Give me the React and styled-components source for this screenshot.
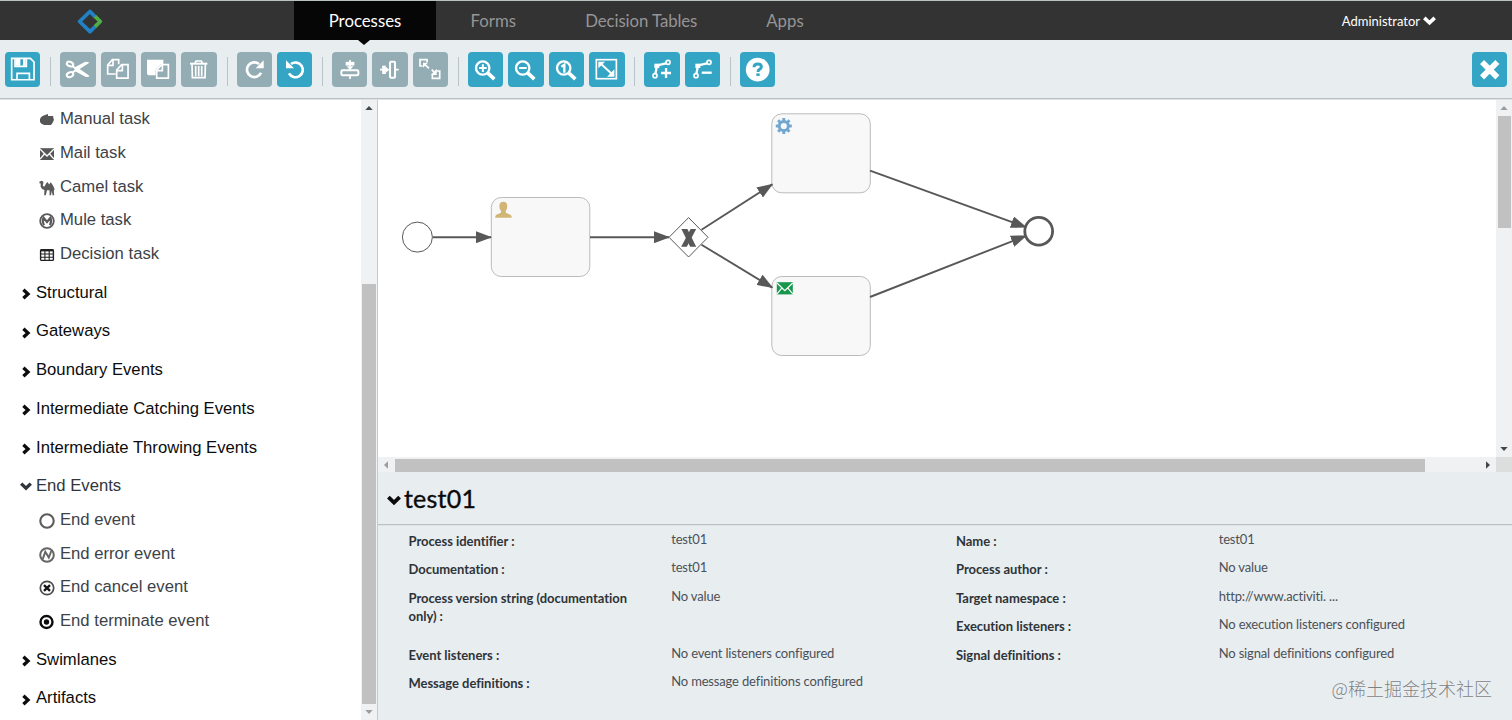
import React from 'react';
import styled, { createGlobalStyle } from 'styled-components';

const GlobalStyle = createGlobalStyle`
  *, *::before, *::after {
    box-sizing: border-box;
  }
  body {
    margin: 0;
    overflow: hidden;
    background: #fff;
    font-family: Lato, 'Noto Sans', sans-serif;
  }
`;

const Page = styled.div`
  display: flex;
  flex-direction: column;
  width: 1512px;
  height: 720px;
  overflow: hidden;
`;

/* top navigation */

const Navbar = styled.nav`
  display: flex;
  flex: none;
  height: 40px;
  border-top: 1px solid #bac2c0;
  background: #333;
`;

const Brand = styled.a`
  display: flex;
  width: 294px;
  padding: 7px 0 0 76px;
`;

const Tab = styled.a`
  position: relative;
  display: flex;
  align-items: center;
  justify-content: center;
  width: ${({ $width }) => $width}px;
  font-size: 16.8px;
  letter-spacing: ${({ $spacing = 0 }) => $spacing}px;
  white-space: nowrap;
  color: ${({ $active }) => ($active ? '#fff' : '#959595')};
  background: ${({ $active }) => ($active ? '#060606' : 'transparent')};

  &::after {
    content: '';
    display: ${({ $active }) => ($active ? 'block' : 'none')};
    position: absolute;
    top: 100%;
    left: 50%;
    margin-left: -7px;
    border: 6px solid transparent;
    border-top: 5px solid #060606;
    border-bottom: 0;
  }
`;

const Account = styled.div`
  display: flex;
  align-items: center;
  gap: 3px;
  margin-left: auto;
  padding-right: 76px;
  font-size: 13px;
  color: #fff;

  svg {
    margin-bottom: 1px;
  }
`;

/* editor toolbar */

const Toolbar = styled.div`
  display: flex;
  flex: none;
  align-items: flex-start;
  height: 60px;
  padding: 12px 4.7px 0 5px;
  border-bottom: 1px solid #dfe2e5;
  box-shadow: inset 0 -1px #bcc1c7;
  background: #e8edf0;
`;

const ButtonGroup = styled.div`
  display: flex;
  gap: 5px;

  & + & {
    margin-left: 9.9px;
    padding-left: 9.9px;
    background: linear-gradient(#b9c4ca, #b9c4ca) no-repeat 0 5px / 1px 29px;
  }
`;

const ToolButton = styled.button`
  width: 35.4px;
  height: 35.4px;
  padding: 0;
  border: 0;
  border-radius: 4px;
  color: #fff;
  background: ${({ $disabled }) => ($disabled ? '#94adb4' : '#34a5c4')};

  svg {
    display: block;
    width: 100%;
    height: 100%;
  }
`;

const CloseButton = styled(ToolButton)`
  margin-left: auto;
`;

/* stencil palette */

const Workspace = styled.main`
  display: flex;
  flex: 1;
  min-height: 0;
`;

const Palette = styled.aside`
  display: flex;
  flex: none;
  width: 378px;
  border-right: 1px solid #c6cace;
`;

const StencilList = styled.div`
  flex: 1;
  padding-top: 2.5px;
  font-family: 'Liberation Sans', Arial, sans-serif;
  font-size: 16.66px;
`;

const Group = styled.div`
  display: flex;
  align-items: center;
  gap: 4px;
  height: 33.7px;
  margin-top: 5px;
  padding-left: 20px;
  color: ${({ $open }) => ($open ? '#30363c' : '#0c0c0c')};

  svg {
    margin-top: ${({ $open }) => ($open ? 0 : 3)}px;
  }
`;

const Stencil = styled.div`
  display: flex;
  align-items: center;
  gap: 5px;
  height: 33.7px;
  padding-left: 39px;
  color: #3c4248;

  svg {
    margin-top: 2px;
  }
`;

/* scrollbars */

const Scrollbar = styled.div`
  display: flex;
  flex: none;
  align-items: center;
  justify-content: space-between;
  flex-direction: ${({ $horizontal }) => ($horizontal ? 'row' : 'column')};
  ${({ $horizontal }) =>
    $horizontal ? 'height: 15px; flex: 1;' : 'width: 16px;'}
  background: #f0f1f2;
`;

const Thumb = styled.div`
  flex: none;
  width: ${({ $width }) => $width}px;
  height: ${({ $height }) => $height}px;
  margin-top: ${({ $top = 0 }) => $top}px;
  margin-right: ${({ $right = 0 }) => $right}px;
  margin-bottom: ${({ $bottom = 0 }) => $bottom}px;
  background: #c1c1c1;
`;

const ScrollArrow = styled.svg`
  flex: none;
  width: 16px;
  height: 16px;
  fill: ${({ $muted }) => ($muted ? '#9b9d9f' : '#454749')};
  transform: rotate(${({ $turn = 0 }) => $turn}deg);
`;

const Editor = styled.section`
  display: flex;
  flex: 1;
  flex-direction: column;
  min-width: 0;
`;

const CanvasRow = styled.div`
  display: flex;
  flex: none;
  height: 357px;
`;

const Diagram = styled.svg`
  display: block;
  flex: none;
  background: #fff;
`;

const ScrollRow = styled.div`
  display: flex;
  flex: none;
  height: 15px;
`;

const Corner = styled.div`
  width: 16px;
  background: #dcdddd;
`;

/* properties */

const Properties = styled.section`
  position: relative;
  flex: 1;
  background: #e8edf0;
`;

const PropertiesTitle = styled.h2`
  display: flex;
  align-items: center;
  gap: 3.5px;
  height: 54px;
  margin: 0;
  padding: 0 0 1px 8.5px;
  border-bottom: 1px solid #dfe2e5;
  box-shadow: inset 0 -1px #bcc1c7;
  font-size: 25px;
  font-weight: 400;
  letter-spacing: 0.2px;
  color: #0a0a0a;
  -webkit-text-stroke: 0.35px #0a0a0a;

  svg {
    margin-top: 4px;
  }
`;

const Columns = styled.div`
  display: grid;
  grid-template-columns: 547.5px 1fr;
  padding: 0 0 0 30.5px;
`;

const Property = styled.dl`
  display: grid;
  grid-template-columns: 230px 1fr;
  column-gap: 32.7px;
  height: ${({ $tall }) => ($tall ? 57 : 28.5)}px;
  margin: 0;
  font-size: 13px;
  line-height: 18.4px;

  dt {
    padding-top: 5.5px;
    font-weight: 700;
    letter-spacing: -0.04px;
    color: #2f3439;
  }
  dd {
    margin: 0;
    padding-top: 3.7px;
    letter-spacing: -0.16px;
    color: #4c5157;
  }
`;

const Watermark = styled.span`
  position: absolute;
  right: 20px;
  bottom: 19px;
  font-family: 'Noto Sans CJK SC', sans-serif;
  font-size: 18px;
  font-weight: 300;
  line-height: 26px;
  color: #7d8185;
  text-shadow: 0 0 1px #fff;
`;

const Magnifier = ({ children }) => (
  <>
    <circle cx="44" cy="48" r="20" fill="none" stroke="currentColor" strokeWidth="7" />
    <path d="M58 62 L79 81" stroke="currentColor" strokeWidth="11" />
    {children}
  </>
);

const Flow = () => (
  <g fill="none" stroke="currentColor">
    <path d="M34 66 L39 40 L66 34" strokeWidth="7" />
    <circle cx="33" cy="71" r="6" strokeWidth="5" />
    <circle cx="72" cy="31" r="6" strokeWidth="5" />
    <path d="M31 35h15v13H31z" fill="currentColor" stroke="none" />
  </g>
);

const toolIcons = {
  save: (
    <g fill="none" stroke="currentColor" strokeWidth="5">
      <path d="M20 19H76L87 30V83H20Z" />
      <path d="M36 83V64H73V83" />
      <path d="M30 20V43H64V20" />
      <path d="M32 21H46V41H32ZM54 21H62V41H54Z" fill="currentColor" stroke="none" />
    </g>
  ),
  cut: (
    <g fill="none" stroke="currentColor" strokeWidth="6">
      <ellipse cx="30" cy="36" rx="10" ry="6.5" transform="rotate(22 30 36)" />
      <ellipse cx="30" cy="68" rx="10" ry="7" transform="rotate(-22 30 68)" />
      <path d="M36 41 L48 50 M36 63 L48 54" />
      <path
        d="M44 46 L76 29 Q84 29 88 32 L59 51 L89 72 Q83 77 76 74 L44 57Z"
        fill="currentColor"
        stroke="none"
      />
    </g>
  ),
  copy: (
    <g fill="none" stroke="currentColor" strokeWidth="5">
      <path d="M44 66H20V39L34 23H53V37" />
      <path d="M20 40H36V24" />
      <path d="M47 78V54L62 38H81V78Z" />
      <path d="M48 56H64V39" />
    </g>
  ),
  paste: (
    <>
      <path d="M18 23H67V36H60L44 53V70H22L18 66Z" fill="currentColor" />
      <g fill="none" stroke="currentColor" strokeWidth="5">
        <path d="M47 78V54L62 38H82V78Z" />
        <path d="M48 56H64V39" />
      </g>
    </>
  ),
  trash: (
    <g fill="none" stroke="currentColor" strokeWidth="5">
      <path d="M27 35H79" strokeWidth="6" />
      <path d="M42 34L45 27H61L64 34" />
      <path d="M33 37L34 77H72L73 37" />
      <path d="M44 42V73M53 42V73M62 42V73" />
    </g>
  ),
  redo: (
    <>
      <path
        d="M72 62 A22 22 0 1 1 66 36"
        fill="none"
        stroke="currentColor"
        strokeWidth="8"
      />
      <path d="M80 25V49H56Z" fill="currentColor" />
    </>
  ),
  undo: (
    <>
      <path
        d="M42 36 A22 22 0 1 1 36 64"
        fill="none"
        stroke="currentColor"
        strokeWidth="8"
      />
      <path d="M27 25V49H51Z" fill="currentColor" />
    </>
  ),
  alignVertical: (
    <g fill="none" stroke="currentColor">
      <rect x="28" y="55" width="51" height="15" rx="4" strokeWidth="6" />
      <path d="M54 24V43M54 70V81" strokeWidth="5" />
      <path d="M41 35H67" strokeWidth="11" />
      <path d="M44 43H64L54 54Z" fill="currentColor" stroke="none" />
    </g>
  ),
  alignHorizontal: (
    <g fill="none" stroke="currentColor">
      <rect x="54" y="29" width="15" height="48" rx="3" strokeWidth="6" />
      <path d="M24 53H43M70 53H80" strokeWidth="5" />
      <path d="M36 41V66" strokeWidth="11" />
      <path d="M41 44V62L52 53Z" fill="currentColor" stroke="none" />
    </g>
  ),
  sameSize: (
    <g fill="none" stroke="currentColor" strokeWidth="5">
      <path d="M29 42H21V23H42V31" />
      <path d="M67 57H80V79H58V69" />
      <path d="M36 38L48 49M56 53L65 62" />
      <path d="M30 32H45L30 47ZM71 50V69H53Z" fill="currentColor" stroke="none" />
    </g>
  ),
  zoomIn: (
    <Magnifier>
      <path d="M33 48H56M44.5 37V60" stroke="currentColor" strokeWidth="6" />
    </Magnifier>
  ),
  zoomOut: (
    <Magnifier>
      <path d="M33 48H56" stroke="currentColor" strokeWidth="6" />
    </Magnifier>
  ),
  zoomActual: (
    <Magnifier>
      <path d="M37 44L46 38V62" fill="none" stroke="currentColor" strokeWidth="7" />
    </Magnifier>
  ),
  zoomFit: (
    <>
      <rect x="22" y="23" width="60" height="57" fill="none" stroke="currentColor" strokeWidth="5" />
      <path d="M37 37L68 65" stroke="currentColor" strokeWidth="6" />
      <path d="M28 29H48L28 49ZM76 52V74H54Z" fill="currentColor" />
    </>
  ),
  bendAdd: (
    <>
      <Flow />
      <path d="M51 63H81M66 48V78" stroke="currentColor" strokeWidth="7" />
    </>
  ),
  bendRemove: (
    <>
      <Flow />
      <path d="M50 62H80" stroke="currentColor" strokeWidth="7" />
    </>
  ),
  help: (
    <>
      <circle cx="53" cy="53" r="35.5" fill="currentColor" />
      <path
        d="M42 46Q42 36 53 36Q64 36 64 44.5Q64 50 58 52.5Q54 54 54 60"
        fill="none"
        stroke="#34a5c4"
        strokeWidth="9"
      />
      <path d="M49 64H59V72H49Z" fill="#34a5c4" />
    </>
  ),
  close: <path d="M30 30L76 76M76 30L30 76" stroke="currentColor" strokeWidth="17" />,
};

const ToolIcon = ({ name }) => <svg viewBox="0 0 106 106">{toolIcons[name]}</svg>;

const Chevron = ({ down, size = 12 }) => (
  <svg width={size} height={size} viewBox="0 0 12 12">
    <path
      d={down ? 'M1.2 3.6L6 8.2L10.8 3.6' : 'M3.4 1.8L8 6L3.4 10.2'}
      fill="none"
      stroke="currentColor"
      strokeWidth="3.3"
    />
  </svg>
);

const stencilIcons = {
  manual: (
    <path
      d="M1 7Q2 4 6 3L9 2V4H14Q15 5 14 6L15 7L14.5 9L13.5 11L12 13H5Q2 12 1 10Z"
      fill="#565656"
    />
  ),
  mail: (
    <>
      <path d="M1 2.2H15V14H1Z" fill="#565656" />
      <path
        d="M1 3L8 10L15 3M1 13.2L5.4 8M15 13.2L10.6 8"
        fill="none"
        stroke="#fff"
        strokeWidth="1.3"
      />
    </>
  ),
  camel: (
    <path
      d="M0.5 1.5L3 0.8L4.5 2L3.8 6L5.5 6.5L7 3.4L8.7 2L10 4.4L11.8 2.2L14 5.5L15.6 9L14.8 11L15.2 15.2H13.6L12.8 11L12 15.2H10.6L10.5 10.3L8 10.2L6.8 15.2H5.2L5.4 10L3 9L1.6 6.5L1.7 3.6L0.4 3.3Z"
      fill="#5a5a5a"
    />
  ),
  mule: (
    <>
      <circle cx="8" cy="8" r="6.8" fill="none" stroke="#5a5a5a" strokeWidth="1.8" />
      <path
        d="M5 12.3Q2.9 8 4.6 4.8L8 9L11.4 4.8Q13 8 11 12.3"
        fill="none"
        stroke="#5a5a5a"
        strokeWidth="2.2"
      />
    </>
  ),
  decision: (
    <g fill="none" stroke="#222">
      <rect x="1.6" y="2.6" width="12.8" height="10.8" rx="1" strokeWidth="1.4" />
      <path d="M1.5 3.4H14.5" strokeWidth="2" />
      <path d="M1.5 7H14.5M1.5 10.2H14.5M5.9 3V13M10.2 3V13" strokeWidth="1.1" />
    </g>
  ),
  end: <circle cx="8" cy="8" r="6.7" fill="none" stroke="#5c5c5c" strokeWidth="2.1" />,
  error: (
    <g fill="none" stroke="#666">
      <circle cx="8" cy="8" r="6.8" strokeWidth="2" />
      <path d="M3.8 11.8L6.3 4.8L9.8 10.5L12.3 4" strokeWidth="2" />
    </g>
  ),
  cancel: (
    <g fill="none">
      <circle cx="8" cy="8" r="6.7" stroke="#4a4a4a" strokeWidth="1.7" />
      <path d="M5 5.2L11 10.8M11 5.2L5 10.8" stroke="#151515" strokeWidth="2.4" />
    </g>
  ),
  terminate: (
    <>
      <circle cx="7.5" cy="8" r="6" fill="none" stroke="#0d0d0d" strokeWidth="2.4" />
      <circle cx="7.5" cy="8" r="2.7" fill="#0d0d0d" />
    </>
  ),
};

const toolGroups = [
  [{ icon: 'save' }],
  [
    { icon: 'cut', disabled: true },
    { icon: 'copy', disabled: true },
    { icon: 'paste', disabled: true },
    { icon: 'trash', disabled: true },
  ],
  [{ icon: 'redo', disabled: true }, { icon: 'undo' }],
  [
    { icon: 'alignVertical', disabled: true },
    { icon: 'alignHorizontal', disabled: true },
    { icon: 'sameSize', disabled: true },
  ],
  [{ icon: 'zoomIn' }, { icon: 'zoomOut' }, { icon: 'zoomActual' }, { icon: 'zoomFit' }],
  [{ icon: 'bendAdd' }, { icon: 'bendRemove' }],
  [{ icon: 'help' }],
];

const palette = [
  { icon: 'manual', name: 'Manual task' },
  { icon: 'mail', name: 'Mail task' },
  { icon: 'camel', name: 'Camel task' },
  { icon: 'mule', name: 'Mule task' },
  { icon: 'decision', name: 'Decision task' },
  { group: true, name: 'Structural' },
  { group: true, name: 'Gateways' },
  { group: true, name: 'Boundary Events' },
  { group: true, name: 'Intermediate Catching Events' },
  { group: true, name: 'Intermediate Throwing Events' },
  { group: true, open: true, name: 'End Events' },
  { icon: 'end', name: 'End event' },
  { icon: 'error', name: 'End error event' },
  { icon: 'cancel', name: 'End cancel event' },
  { icon: 'terminate', name: 'End terminate event' },
  { group: true, name: 'Swimlanes' },
  { group: true, name: 'Artifacts' },
];

const properties = [
  [
    { label: 'Process identifier', value: 'test01' },
    { label: 'Documentation', value: 'test01' },
    { label: 'Process version string (documentation only)', value: 'No value', tall: true },
    { label: 'Event listeners', value: 'No event listeners configured' },
    { label: 'Message definitions', value: 'No message definitions configured' },
  ],
  [
    { label: 'Name', value: 'test01' },
    { label: 'Process author', value: 'No value' },
    { label: 'Target namespace', value: 'http://www.activiti. ...' },
    { label: 'Execution listeners', value: 'No execution listeners configured' },
    { label: 'Signal definitions', value: 'No signal definitions configured' },
  ],
];

const flows = [
  'M433 237.2H491',
  'M590 237.2H669',
  'M701.5 229.7L772.3 184.4',
  'M701.5 244.7L772.3 287.6',
  'M870 170.7L1026 227.2',
  'M870 297L1026 235.8',
];

const Arrow = ({ turn }) => (
  <ScrollArrow viewBox="0 0 16 16" $turn={turn.deg} $muted={turn.muted}>
    <path d="M4.3 10L8 6L11.7 10Z" />
  </ScrollArrow>
);

const ProcessDiagram = () => (
  <Diagram width="1118" height="357" viewBox="378 100 1118 357">
    <defs>
      <marker
        id="arrow"
        markerUnits="userSpaceOnUse"
        markerWidth="16"
        markerHeight="12"
        refX="15"
        refY="6"
        orient="auto"
      >
        <path d="M0 0L16 6L0 12Z" fill="#585858" />
      </marker>
    </defs>
    <g fill="#f8f8f8" stroke="#bbb">
      <rect x="491.3" y="197.5" width="98.5" height="79" rx="10" />
      <rect x="771.8" y="113.8" width="98.5" height="79" rx="10" />
      <rect x="771.8" y="276.5" width="98.5" height="79" rx="10" />
    </g>
    <g fill="none" stroke="#585858" strokeWidth="1.9">
      {flows.map(d => (
        <path key={d} d={d} markerEnd="url(#arrow)" />
      ))}
    </g>
    <circle cx="417.4" cy="237.1" r="15" fill="#fff" stroke="#585858" />
    <circle cx="1038.7" cy="231.2" r="13.9" fill="#fff" stroke="#585858" strokeWidth="2.8" />
    <path d="M688.6 217.6L708 237.3L688.6 257L669 237.3Z" fill="#fff" stroke="#585858" />
    <path d="M681.4 229H687.4L696.2 246.7H690.2Z" fill="#585858" />
    <path d="M696.2 229H690.6L681.2 246.7H686.8Z" fill="#585858" />
    {/* user task */}
    <path
      d="M495.3 217.8V216Q496 214.4 499.5 213.5L501 212.6V211Q499.3 209 499.3 206Q499.5 201.7 503.3 201.7Q507.2 201.7 507.3 206Q507.3 209 505.7 211V212.6L507.3 213.5Q511 214.4 511.6 216V217.8Z"
      fill="#d1b575"
    />
    {/* service task */}
    <g transform="translate(783.8 126)" fill="none" stroke="#72a7d0">
      <circle r="4.6" strokeWidth="3" />
      {[0, 45, 90, 135, 180, 225, 270, 315].map(deg => (
        <path key={deg} d="M0 -5V-8" strokeWidth="2.9" transform={`rotate(${deg})`} />
      ))}
    </g>
    {/* mail task */}
    <rect x="776.8" y="282.2" width="16" height="12.2" fill="#17974c" />
    <path
      d="M777 283L784.8 290.6L792.7 283M777 293.8L782 287.9M792.7 293.8L787.7 287.9"
      fill="none"
      stroke="#fff"
      strokeWidth="1.2"
    />
  </Diagram>
);

const App = () => (
  <Page>
    <GlobalStyle />
    <Navbar>
      <Brand>
        <svg width="28" height="28" viewBox="0 0 28 28" fill="none" strokeWidth="3.8">
          <path d="M19.2 8.8L14 3.5L3.6 13.5L14 23.7L19.2 18.5" stroke="#2181c4" strokeLinejoin="round" />
          <path d="M19 8.4L24.3 13.5L19 18.7" stroke="#4fae48" strokeLinejoin="round" />
        </svg>
      </Brand>
      <Tab $active $width={142}>Processes</Tab>
      <Tab $width={114.5}>Forms</Tab>
      <Tab $width={181.5} $spacing={-0.08}>Decision Tables</Tab>
      <Tab $width={106}>Apps</Tab>
      <Account>
        Administrator
        <Chevron down size={13} />
      </Account>
    </Navbar>
    <Toolbar>
      {toolGroups.map(group => (
        <ButtonGroup key={group[0].icon}>
          {group.map(({ icon, disabled }) => (
            <ToolButton key={icon} $disabled={disabled}>
              <ToolIcon name={icon} />
            </ToolButton>
          ))}
        </ButtonGroup>
      ))}
      <CloseButton>
        <ToolIcon name="close" />
      </CloseButton>
    </Toolbar>
    <Workspace>
      <Palette>
        <StencilList>
          {palette.map(({ group, open, icon, name }) =>
            group ? (
              <Group key={name} $open={open}>
                <Chevron down={open} />
                {name}
              </Group>
            ) : (
              <Stencil key={name}>
                <svg width="16" height="16" viewBox="0 0 16 16">
                  {stencilIcons[icon]}
                </svg>
                {name}
              </Stencil>
            )
          )}
        </StencilList>
        <Scrollbar>
          <Arrow turn={{ deg: 0 }} />
          <Thumb $width={14} $height={420} $top={167} />
          <Arrow turn={{ deg: 180, muted: true }} />
        </Scrollbar>
      </Palette>
      <Editor>
        <CanvasRow>
          <ProcessDiagram />
          <Scrollbar>
            <Arrow turn={{ deg: 0, muted: true }} />
            <Thumb $width={13} $height={112} $bottom={213} />
            <Arrow turn={{ deg: 180 }} />
          </Scrollbar>
        </CanvasRow>
        <ScrollRow>
          <Scrollbar $horizontal>
            <Arrow turn={{ deg: -90, muted: true }} />
            <Thumb $width={1030} $height={13} $top={1} $right={55} />
            <Arrow turn={{ deg: 90 }} />
          </Scrollbar>
          <Corner />
        </ScrollRow>
        <Properties>
          <PropertiesTitle>
            <Chevron down size={14} />
            test01
          </PropertiesTitle>
          <Columns>
            {properties.map((column, index) => (
              <div key={index}>
                {column.map(({ label, value, tall }) => (
                  <Property key={label} $tall={tall}>
                    <dt>{`${label} :`}</dt>
                    <dd>{value}</dd>
                  </Property>
                ))}
              </div>
            ))}
          </Columns>
          <Watermark>@稀土掘金技术社区</Watermark>
        </Properties>
      </Editor>
    </Workspace>
  </Page>
);

export default App;
